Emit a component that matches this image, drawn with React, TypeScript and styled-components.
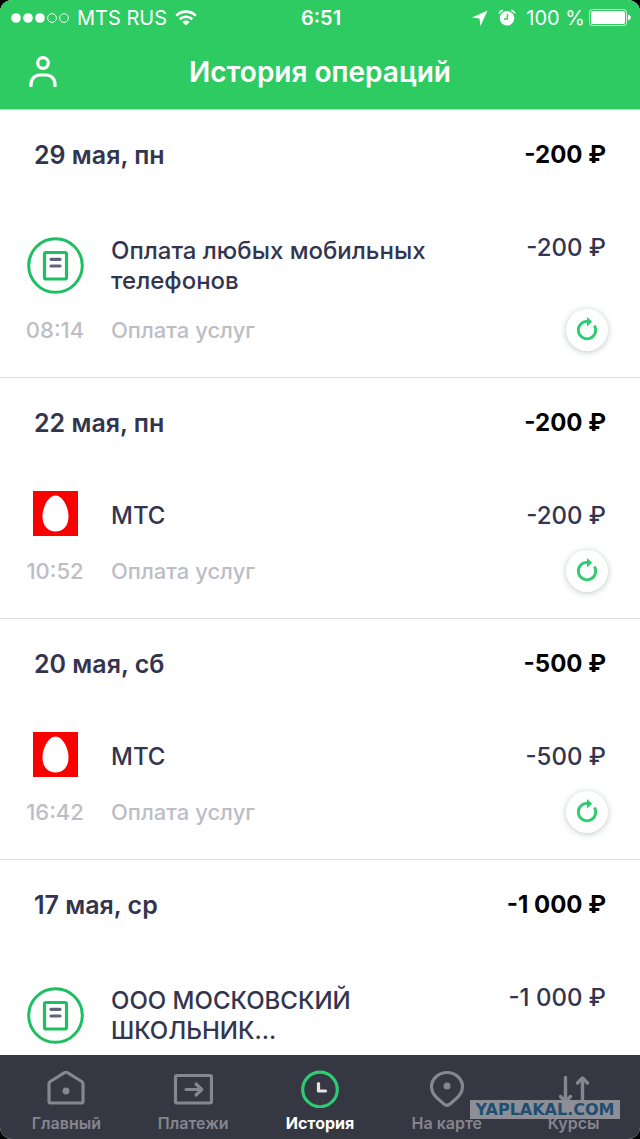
import React from "react";
import styled, { createGlobalStyle } from "styled-components";

const GlobalStyle = createGlobalStyle`
  *, *::before, *::after { box-sizing: border-box; }
  body {
    margin: 0;
    background: #000;
    font-family: Inter, "Liberation Sans", sans-serif;
    color: #33354f;
  }
  button { font: inherit; }
`;

const Screen = styled.div`
  position: relative;
  display: flex;
  flex-direction: column;
  height: 100vh;
  border-radius: 12px;
  overflow: hidden;
  background: #fff;
`;

const Header = styled.header`
  flex: none;
  background: #2ecb62;
  border-bottom: 1px solid #a9e8bd;
  color: #fff;
`;

const StatusBar = styled.div`
  display: grid;
  grid-template-columns: 1fr auto 1fr;
  align-items: center;
  height: 35px;
  padding: 0 9px 0 11px;
  font-size: 20px;
  line-height: 24px;
`;

const StatusGroup = styled.div<{ $end?: boolean }>`
  display: flex;
  align-items: center;
  gap: ${(p) => (p.$end ? 10 : 8)}px;
  justify-content: ${(p) => (p.$end ? "flex-end" : "flex-start")};
`;

const Charge = styled.span`
  display: flex;
  align-items: center;
  gap: 4px;
`;

const Clock = styled.time`
  font-weight: 600;
`;

const NavBar = styled.div`
  display: grid;
  grid-template-columns: 86px 1fr 86px;
  align-items: center;
  height: 74px;
`;

const ProfileButton = styled.button`
  display: flex;
  justify-content: center;
  padding: 0;
  border: 0;
  background: none;
  color: inherit;
`;

const PageTitle = styled.h1`
  margin: 0;
  text-align: center;
  font-size: 28px;
  font-weight: 600;
  line-height: 34px;
`;

const Feed = styled.main`
  flex: 1;
  min-height: 0;
  overflow: hidden;
`;

const Day = styled.section`
  border-bottom: 1px solid #dedee0;
`;

const DayHeader = styled.div`
  display: flex;
  align-items: center;
  justify-content: space-between;
  height: 90px;
  padding: 0 34px;
  font-size: 25px;
  line-height: 30px;
`;

const DayTitle = styled.h2`
  margin: 0;
  font-size: inherit;
  font-weight: 600;
`;

const DayTotal = styled.strong`
  font-size: 24px;
  font-weight: 700;
  color: #000;
`;

const Operation = styled.article`
  display: grid;
  grid-template-columns: 110px 1fr auto;
  column-gap: 1px;
  padding: 23px 0 26px;
`;

const Emblem = styled.div<{ $tall: boolean }>`
  display: flex;
  align-items: flex-start;
  justify-content: center;
  padding-top: ${(p) => (p.$tall ? 13 : 0)}px;
`;

const Name = styled.h3<{ $tall: boolean }>`
  margin: 0;
  max-width: 360px;
  padding: ${(p) => (p.$tall ? "13px 0" : "10px 0 19px")};
  font-size: 24px;
  font-weight: 500;
  line-height: 30px;
`;

const Amount = styled.span`
  padding: 10px 34px 0 0;
  font-size: 24px;
  font-weight: 500;
  line-height: 30px;
`;

const Meta = styled.span<{ $center?: boolean }>`
  align-self: center;
  text-align: ${(p) => (p.$center ? "center" : "left")};
  font-size: 22px;
  font-weight: 500;
  line-height: 26px;
  color: #bdbdc5;
`;

const RepeatButton = styled.button`
  display: flex;
  align-items: center;
  justify-content: center;
  justify-self: end;
  width: 42px;
  height: 42px;
  margin-right: 32px;
  padding: 0;
  border: 0;
  border-radius: 50%;
  background: #fff;
  box-shadow: 0 1px 6px rgba(30, 80, 60, 0.3);
`;

const TabBar = styled.nav`
  position: relative;
  flex: none;
  display: grid;
  grid-template-columns: repeat(5, 1fr);
  height: 84px;
  padding: 0 3px;
  background: #353743;
`;

const Tab = styled.a<{ $active?: boolean }>`
  display: flex;
  flex-direction: column;
  align-items: center;
  gap: 4px;
  padding-top: 13px;
  color: ${(p) => (p.$active ? "#fff" : "#85868f")};
  font-size: 16px;
  font-weight: ${(p) => (p.$active ? 700 : 600)};
  line-height: 22px;
  text-decoration: none;
  white-space: nowrap;
`;

const Watermark = styled.span`
  position: absolute;
  right: 20px;
  bottom: 20px;
  width: 150px;
  height: 19px;
  background: #8e8f96;
  color: #1f4e70;
  font-family: "DejaVu Sans", sans-serif;
  font-size: 16px;
  font-weight: 700;
  line-height: 19px;
  text-align: center;
`;

const SignalIcon = () => (
  <svg width="58" height="12" viewBox="0 0 58 12" aria-hidden="true">
    {[5, 17, 29].map((x) => (
      <circle key={x} cx={x} cy="6" r="4.800" fill="#fff" />
    ))}
    {[41, 53].map((x) => (
      <circle key={x} cx={x} cy="6" r="4.400" fill="none" stroke="#fff" strokeWidth="1" />
    ))}
  </svg>
);

const WifiIcon = () => (
  <svg width="22" height="16" viewBox="0 0 22 16" fill="none" stroke="#fff" strokeWidth="2.6" aria-hidden="true">
    <path d="M1.2 5.6a14 14 0 0 1 19.6 0" />
    <path d="M4.7 9.3a9 9 0 0 1 12.6 0" />
    <path d="M11 15.6 7.4 12a5.1 5.1 0 0 1 7.2 0z" fill="#fff" stroke="none" />
  </svg>
);

const LocationIcon = () => (
  <svg width="16" height="16" viewBox="0 0 16 16" aria-hidden="true">
    <path d="M15.6.4 0 7.600l7.500.9L8.400 16z" fill="#fff" />
  </svg>
);

const AlarmIcon = () => (
  <svg width="18" height="17" viewBox="0 0 18 17" fill="none" aria-hidden="true">
    <circle cx="9" cy="9.3" r="7.2" fill="#fff" />
    <path d="M9.4 5v5H6" stroke="#2ecb62" strokeWidth="1.4" />
    <path d="M1 4.600Q2 1.800 5 1.200M17 4.600Q16 1.800 13 1.200" stroke="#fff" strokeWidth="1.5" />
  </svg>
);

const BatteryIcon = () => (
  <svg width="42" height="17" viewBox="0 0 42 17" aria-hidden="true">
    <rect x=".5" y=".5" width="37" height="16" rx="3" fill="none" stroke="#fff" strokeOpacity=".8" />
    <rect x="2" y="2" width="34" height="13" rx="2" fill="#fff" />
    <path d="M39 5.5q3 1 3 3t-3 3z" fill="#fff" />
  </svg>
);

const ProfileIcon = () => (
  <svg width="28" height="32" viewBox="0 0 28 32" fill="none" stroke="#fff" strokeWidth="3.2" aria-hidden="true">
    <circle cx="14" cy="7" r="5.3" />
    <path d="M2 31v-2.500c0-6 4-9.500 9-9.500h6c5 0 9 3.500 9 9.500V31" />
  </svg>
);

const BillIcon = () => (
  <svg width="58" height="58" viewBox="0 0 58 58" fill="none" aria-hidden="true">
    <circle cx="29.500" cy="29.500" r="26.800" stroke="#1dbf62" strokeWidth="3" />
    <rect x="18.500" y="16.500" width="22" height="26.500" rx="1.500" stroke="#1dbf62" strokeWidth="3.200" />
    <path d="M25 23.300h9M25 30h9" stroke="#60647a" strokeWidth="3.200" strokeLinecap="round" />
  </svg>
);

const EggIcon = () => (
  <svg width="45" height="45" viewBox="0 0 45 45" aria-hidden="true">
    <rect width="45" height="45" fill="#fb0000" />
    <path d="M22.500 4.500C29.500 4.500 35.500 16 35.500 25.500 35.500 35 30 40.500 22.500 40.500S9.500 35 9.500 25.500C9.500 16 15.500 4.500 22.500 4.500z" fill="#fff" />
  </svg>
);

const RepeatIcon = () => (
  <svg width="24" height="26" viewBox="0 0 24 26" fill="none" aria-hidden="true">
    <path d="M12.500 4.400A8.700 8.700 0 1 0 19.400 8.500" stroke="#2ecc71" strokeWidth="2.800" />
    <path d="M12 0 17.200 4.700 12 9.400z" fill="#2ecc71" />
  </svg>
);

const HomeIcon = () => (
  <svg width="40" height="40" viewBox="0 0 40 40" fill="none" aria-hidden="true">
    <path d="M4.300 13.500Q3 14.300 3 16v17.500Q3 35 4.500 35h31q1.500 0 1.500-1.500V16q0-1.700-1.300-2.500L21.500 4.700q-1.500-.9-3 0z" stroke="currentColor" strokeWidth="3.200" />
    <circle cx="20" cy="23" r="3.500" fill="currentColor" />
  </svg>
);

const PaymentsIcon = () => (
  <svg width="40" height="40" viewBox="0 0 40 40" fill="none" stroke="currentColor" strokeWidth="3.200" aria-hidden="true">
    <rect x="2.500" y="7.500" width="36" height="27.500" rx="1.500" />
    <path d="M13 21.500H28.500M23 16l5.800 5.500-5.800 5.500" strokeLinecap="round" strokeLinejoin="round" />
  </svg>
);

const HistoryIcon = () => (
  <svg width="40" height="40" viewBox="0 0 40 40" fill="none" aria-hidden="true">
    <circle cx="20" cy="21.500" r="17.300" stroke="#2ecc71" strokeWidth="3.200" />
    <path d="M18.500 15.500V23H25.500" stroke="#e4e4e6" strokeWidth="3.200" strokeLinecap="round" strokeLinejoin="round" />
  </svg>
);

const MapIcon = () => (
  <svg width="40" height="40" viewBox="0 0 40 40" fill="none" aria-hidden="true">
    <path d="M20 4.500c8.700 0 15.500 6.400 15.500 14.500 0 7-5.500 11-12.500 17-2 1.700-4 1.700-6 0C10 30 4.500 26 4.500 19 4.500 10.900 11.300 4.500 20 4.500z" stroke="currentColor" strokeWidth="3.200" />
    <circle cx="20" cy="18" r="3.500" fill="currentColor" />
  </svg>
);

const RatesIcon = () => (
  <svg width="40" height="40" viewBox="0 0 40 40" fill="none" stroke="currentColor" strokeWidth="3.400" strokeLinecap="round" strokeLinejoin="round" aria-hidden="true">
    <path d="M11.500 9.500V33M6.500 28.500l5 5 5-5" />
    <path d="M28.500 34V10M23.500 15l5-5 5 5" />
  </svg>
);

interface Entry {
  date: string;
  total: string;
  name: string;
  kind: "bill" | "mts";
  time?: string;
  category?: string;
}

const entries: Entry[] = [
  { date: "29 мая, пн", total: "-200 ₽", name: "Оплата любых мобильных телефонов", kind: "bill", time: "08:14", category: "Оплата услуг" },
  { date: "22 мая, пн", total: "-200 ₽", name: "МТС", kind: "mts", time: "10:52", category: "Оплата услуг" },
  { date: "20 мая, сб", total: "-500 ₽", name: "МТС", kind: "mts", time: "16:42", category: "Оплата услуг" },
  { date: "17 мая, ср", total: "-1 000 ₽", name: "ООО МОСКОВСКИЙ ШКОЛЬНИК...", kind: "bill" },
];

const tabs = [
  { label: "Главный", Icon: HomeIcon },
  { label: "Платежи", Icon: PaymentsIcon },
  { label: "История", Icon: HistoryIcon, active: true },
  { label: "На карте", Icon: MapIcon },
  { label: "Курсы", Icon: RatesIcon },
];

export default function App() {
  return (
    <>
      <GlobalStyle />
      <Screen>
        <Header>
          <StatusBar>
            <StatusGroup>
              <SignalIcon />
              <span>MTS RUS</span>
              <WifiIcon />
            </StatusGroup>
            <Clock>6:51</Clock>
            <StatusGroup $end>
              <LocationIcon />
              <AlarmIcon />
              <Charge>
                100 %
                <BatteryIcon />
              </Charge>
            </StatusGroup>
          </StatusBar>
          <NavBar>
            <ProfileButton aria-label="Профиль">
              <ProfileIcon />
            </ProfileButton>
            <PageTitle>История операций</PageTitle>
          </NavBar>
        </Header>
        <Feed>
          {entries.map((e) => (
            <Day key={e.date}>
              <DayHeader>
                <DayTitle>{e.date}</DayTitle>
                <DayTotal>{e.total}</DayTotal>
              </DayHeader>
              <Operation>
                <Emblem $tall={e.kind === "bill"}>{e.kind === "bill" ? <BillIcon /> : <EggIcon />}</Emblem>
                <Name $tall={e.kind === "bill"}>{e.name}</Name>
                <Amount>{e.total}</Amount>
                {e.time && (
                  <>
                    <Meta $center>{e.time}</Meta>
                    <Meta>{e.category}</Meta>
                    <RepeatButton aria-label="Повторить">
                      <RepeatIcon />
                    </RepeatButton>
                  </>
                )}
              </Operation>
            </Day>
          ))}
        </Feed>
        <TabBar>
          {tabs.map(({ label, Icon, active }) => (
            <Tab key={label} href="#" $active={active} aria-current={active ? "page" : undefined}>
              <Icon />
              {label}
            </Tab>
          ))}
          <Watermark>YAPLAKAL.COM</Watermark>
        </TabBar>
      </Screen>
    </>
  );
}
